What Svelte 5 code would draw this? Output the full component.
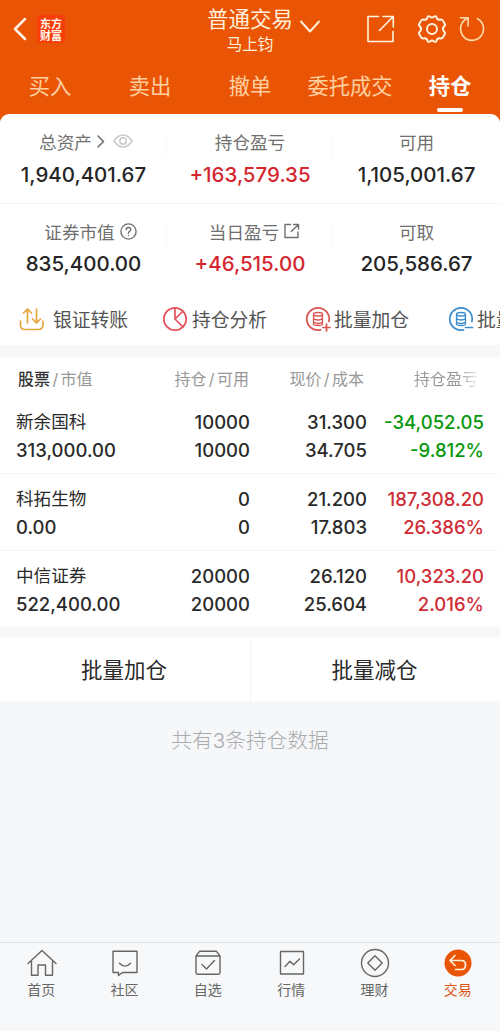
<script>
  const tabs = ['买入', '卖出', '撤单', '委托成交', '持仓'];
  const summary = [
    [
      { label: '总资产', value: '1,940,401.67', icon: 'eye' },
      { label: '持仓盈亏', value: '+163,579.35', up: true },
      { label: '可用', value: '1,105,001.67' }
    ],
    [
      { label: '证券市值', value: '835,400.00', icon: 'help' },
      { label: '当日盈亏', value: '+46,515.00', up: true, icon: 'share' },
      { label: '可取', value: '205,586.67' }
    ]
  ];
  const holdings = [
    { name: '新余国科', value: '313,000.00', qty: '10000', avail: '10000', price: '31.300', cost: '34.705', profit: '-34,052.05', rate: '-9.812%', down: true },
    { name: '科拓生物', value: '0.00', qty: '0', avail: '0', price: '21.200', cost: '17.803', profit: '187,308.20', rate: '26.386%' },
    { name: '中信证券', value: '522,400.00', qty: '20000', avail: '20000', price: '26.120', cost: '25.604', profit: '10,323.20', rate: '2.016%' }
  ];
  const actions = [
    { id: 'transfer', label: '银证转账' },
    { id: 'pie', label: '持仓分析' },
    { id: 'plus', label: '批量加仓' },
    { id: 'minus', label: '批量减仓' }
  ];
  const nav = [
    { id: 'home', label: '首页' },
    { id: 'chat', label: '社区' },
    { id: 'pick', label: '自选' },
    { id: 'market', label: '行情' },
    { id: 'wealth', label: '理财' },
    { id: 'trade', label: '交易' }
  ];
</script>

<div class="screen">
  <header>
    <div class="topbar">
      <div class="left">
        <svg class="back" width="14" height="24" viewBox="0 0 14 24"><path d="M12 2 2 12l10 10" /></svg>
        <div class="logo">东方<br />财富</div>
      </div>
      <div class="account">
        <div class="names">
          <div class="title">普通交易</div>
          <div class="user">马上钧</div>
        </div>
        <svg class="chevron" width="20" height="14" viewBox="0 0 20 14"><path d="m1 1.5 9 10 9-10" /></svg>
      </div>
      <div class="tools">
        <svg width="28" height="28" viewBox="0 0 28 28"><path d="M11.5 1.5H1v25h25V16.500M16 1.500h10.300V12M26 1.800 12.500 15.500" /></svg>
        <svg class="gear" width="30" height="30" viewBox="0 0 30 30"><path d="M10.500 3.200Q11.300 1.500 13 2.600Q15 4.400 17 2.600Q18.700 1.500 19.500 3.200Q20.300 6.300 23.200 5.700Q25 5 26 6.800L27.700 9.700Q28.600 11.300 27 12.500Q24.700 15 27 17.500Q28.600 18.700 27.700 20.300L26 23.200Q25 25 23.200 24.300Q20.300 23.700 19.500 26.800Q18.700 28.500 17 27.400Q15 25.600 13 27.400Q11.300 28.500 10.500 26.800Q9.700 23.700 6.800 24.300Q5 25 4 23.200L2.300 20.300Q1.400 18.700 3 17.500Q5.300 15 3 12.500Q1.400 11.300 2.300 9.700L4 6.800Q5 5 6.800 5.700Q9.700 6.300 10.500 3.200Z" /><circle cx="15" cy="15" r="5" /></svg>
        <svg class="reload" width="26" height="26" viewBox="0 0 26 26"><path d="M18.500 2.700A11.500 11.500 0 1 1 8 2.500M1.500 1.700 9.200 1.900 9 10" /></svg>
      </div>
    </div>
    <nav class="tabs">
      {#each tabs as tab}
        <div class="tab" class:active={tab === '持仓'}>{tab}</div>
      {/each}
    </nav>
  </header>

  <section class="summary">
    {#each summary as row}
      <div class="sumrow">
        {#each row as cell}
          <div class="cell">
            <div class="label {cell.icon ?? ''}-label">
              <span>{cell.label}</span>
              {#if cell.icon === 'eye'}
                <svg class="arrow" width="8" height="13" viewBox="0 0 8 13"><path d="m1 1 5.500 5.500L1 12" /></svg>
                <svg class="eye" width="20" height="14" viewBox="0 0 20 14"><path d="M1 7Q5 1 10 1T19 7Q15 13 10 13T1 7Z" /><circle cx="10" cy="7" r="3.200" /></svg>
              {:else if cell.icon === 'help'}
                <svg class="help" width="17" height="17" viewBox="0 0 17 17"><circle cx="8.500" cy="8.500" r="7.600" /><path d="M6.200 6.800Q6.200 4.500 8.500 4.500T10.800 6.600Q10.800 7.700 9.500 8.400Q8.500 9 8.500 10.200M8.500 12.500V12.600" /></svg>
              {:else if cell.icon === 'share'}
                <svg class="share" width="16" height="16" viewBox="0 0 16 16"><path d="M6.500 1.500H1v13h13V9M9.500 1.500H14.500V6M14.300 1.700 7.200 8.500" /></svg>
              {/if}
            </div>
            <div class="amount" class:up={cell.up}>{cell.value}</div>
          </div>
        {/each}
      </div>
    {/each}
    <div class="actions">
      {#each actions as action}
        <div class="action {action.id}">
          <svg width="26" height="26" viewBox="0 0 26 26">
            {#if action.id === 'transfer'}
              <path d="M1.500 15v4Q1.500 23.500 6 23.500H19Q24 23.500 24 19V15M8.500 17V3M4.500 7l4-4 4 4M17.500 3v14M13.500 13l4 4 4-4" />
            {:else if action.id === 'pie'}
              <circle cx="13" cy="13" r="11.200" /><path d="M13 2V13L20.500 5.500M13 13l8 8" />
            {:else}
              <path d="M15.500 23.900A11.200 11.200 0 1 1 23.900 15.500" />
              <path d="M8.500 8Q8.500 6.500 13 6.500T17.500 8V18Q17.500 19.500 13 19.500T8.500 18ZM8.500 8Q8.500 10 13 10T17.500 8M8.500 12.500Q10 14 13 14T17.500 12.500M8.500 16Q10 17.500 13 17.500T17.500 16" stroke-width="1.300" />
              <path d={action.id === 'plus' ? 'M18 21.500h7M21.500 18v7' : 'M17.500 21.500h7'} />
            {/if}
          </svg>
          <span>{action.label}</span>
        </div>
      {/each}
    </div>
  </section>

  <section class="holdings">
    <div class="hrow thead">
      <div><b>股票</b><i>/</i>市值</div>
      <div>持仓<i>/</i>可用</div>
      <div>现价<i>/</i>成本</div>
      <div class="fade">持仓盈亏</div>
    </div>
    {#each holdings as item}
      <div class="hrow stock">
        <div><p class="stockname">{item.name}</p><p>{item.value}</p></div>
        <div><p>{item.qty}</p><p>{item.avail}</p></div>
        <div><p>{item.price}</p><p>{item.cost}</p></div>
        <div class="gain" class:down={item.down}><p>{item.profit}</p><p>{item.rate}</p></div>
      </div>
    {/each}
  </section>

  <div class="batch">
    <div>批量加仓</div>
    <div>批量减仓</div>
  </div>
  <p class="count">共有3条持仓数据</p>

  <footer>
    {#each nav as item}
      <div class="navitem" class:current={item.id === 'trade'}>
        <svg width="30" height="30" viewBox="0 0 30 30">
          {#if item.id === 'home'}
            <path d="M1 15.500 15 2.500 29 15.500M4.500 13V27.200H11V17H18.500V27.200H25.500V13" />
          {:else if item.id === 'chat'}
            <path d="M3 3.300H27V24.500H12.500L8.500 27.500V24.500H3ZM9.500 15.200Q15 21 20.500 15.200" />
          {:else if item.id === 'pick'}
            <path d="M3 8 6.500 3.300H23.500L27 8V24.500Q27 26.200 25.300 26.200H4.700Q3 26.200 3 24.500ZM3 8H27M9 16.500l4.500 4.500L21.500 12.500" />
          {:else if item.id === 'market'}
            <path d="M3.500 3.500H26.500V26H3.500ZM8 18.500l5-5.200 3.500 3.400L22.500 11" />
          {:else if item.id === 'wealth'}
            <circle cx="15" cy="15" r="13.500" /><path d="m15 7.800 7.200 7.200L15 22.200 7.800 15Z" />
          {:else}
            <circle class="disc" cx="15" cy="15" r="13.500" /><path class="turn" d="M12 7.500 7 12.500l5 5M7 12.500H18.500Q22.500 12.500 22.500 17T18.500 21.500H12.500" />
          {/if}
        </svg>
        <span>{item.label}</span>
      </div>
    {/each}
  </footer>
</div>

<style>
  :global(body) { margin: 0; background: #f6f7f9; }
  p { margin: 0; }
  svg { display: block; flex: none; fill: none; stroke: currentColor; stroke-width: 1.6; stroke-linecap: round; stroke-linejoin: round; }
  .screen { width: 500px; height: 1031px; display: flex; flex-direction: column; overflow: hidden; background: #f6f7f9; color: #2a2a2a; font-family: Inter, "Noto Sans CJK SC", sans-serif; white-space: nowrap; }
  header { height: 122px; flex: none; background: #e95504; color: #fff0dc; }
  .topbar { height: 58px; display: grid; grid-template-columns: 190px 1fr 136px; }
  .left { display: flex; align-items: center; gap: 10px; padding-left: 13px; }
  .back { stroke-width: 2.5; color: #fff5e8; }
  .logo { width: 28px; height: 28px; box-sizing: border-box; padding-top: 2px; background: #fa3e0a; border-radius: 4px; text-align: center; font: 700 11px/12px "Noto Sans CJK SC", sans-serif; color: #fff7ee; }
  .account { display: flex; gap: 7px; padding-left: 17px; }
  .names { display: flex; flex-direction: column; align-items: center; }
  .title { font-size: 21.5px; line-height: 26px; margin-top: 6px; }
  .user { font-size: 15.5px; line-height: 22px; margin-top: 2px; }
  .chevron { margin-top: 20px; stroke-width: 1.9; }
  .tools { display: flex; align-items: center; padding-left: 3px; color: #fff5e0; }
  .gear { margin-left: 22px; stroke-width: 1.9; }
  .reload { margin-left: 12px; color: #ffdcae; }
  .tabs { display: grid; grid-template-columns: repeat(5, 100px); }
  .tab { height: 54px; line-height: 57px; text-align: center; font-size: 21.3px; color: #ffcfa0; }
  .tab.active { color: #fff; font-weight: 700; display: flex; flex-direction: column; align-items: center; }
  .tab.active::after { content: ""; flex: none; width: 26px; height: 4px; border-radius: 2px; background: #fff; margin-top: -7px; }
  .summary { margin-top: -8px; height: 231px; flex: none; background: #fff; border-radius: 9px 9px 0 0; overflow: hidden; }
  .sumrow { height: 89px; display: grid; grid-template-columns: 167px 166px 167px; border-bottom: 1px solid #f5f5f5; }
  .sumrow:nth-child(2) { border: 0; }
  .cell { text-align: center; background: linear-gradient(#f7f7f7, #f7f7f7) right 22px / 1px 20px no-repeat; }
  .cell:last-child { background: none; }
  .label { display: flex; justify-content: center; align-items: center; height: 26px; margin-top: 14px; font-size: 17.6px; color: #707070; }
  .eye-label { padding-left: 5px; }
  .help-label { padding-left: 14px; }
  .share-label { padding-left: 9px; }
  .arrow { margin-left: 5px; stroke-width: 1.6; }
  .eye { margin-left: 8px; color: #c9c9c9; }
  .help, .share { margin-left: 5px; stroke-width: 1.4; }
  .amount { font-size: 20.5px; line-height: 26px; margin-top: 8px; font-weight: 500; color: #252525; }
  .sumrow:nth-child(2) .amount { margin-top: 7px; }
  .amount.up { color: #d4262f; }
  .actions { display: flex; height: 52px; align-items: center; padding-left: 19px; color: #545454; font-size: 18.8px; }
  .action { display: flex; align-items: center; flex: none; }
  .action span { margin-top: -2px; }
  .action svg { stroke-width: 1.7; }
  .transfer { width: 143px; gap: 8px; }
  .transfer svg { color: #e5a63e; }
  .pie { width: 143px; gap: 4px; }
  .pie svg { color: #e4515b; }
  .plus { width: 143px; gap: 3px; }
  .plus svg { color: #dc514c; }
  .minus { gap: 3px; }
  .minus svg { color: #388bce; }
  .holdings { margin-top: 12px; height: 270px; flex: none; background: #fff; overflow: hidden; }
  .hrow { display: grid; grid-template-columns: 130px 104px 117px 117px; padding: 0 16px; text-align: right; }
  .hrow > :first-child { text-align: left; }
  .thead { height: 40px; line-height: 44px; font-size: 16px; color: #989898; padding: 0 22px 0 18px; grid-template-columns: 130px 101px 115px 114px; }
  .thead b { font-weight: 500; color: #333; }
  .thead i { font-style: normal; margin: 0 2.4px; }
  .fade { background: linear-gradient(90deg, #989898 84%, #eee 99%); -webkit-background-clip: text; background-clip: text; color: transparent; }
  .stock { height: 77px; font-size: 18.5px; font-weight: 500; line-height: 28.300px; padding-top: 11px; box-sizing: border-box; border-bottom: 1px solid #f6f6f6; }
  .stock:last-child { border: 0; }
  .stockname { font-weight: 400; font-size: 17.6px; }
  .gain { color: #cf2c36; }
  .down { color: #09980d; }
  .batch { margin-top: 10px; height: 64px; flex: none; display: grid; grid-template-columns: 1fr 1fr; background: #fff; text-align: center; font-size: 21.5px; line-height: 67px; }
  .batch div { padding-right: 2px; }
  .batch div + div { border-left: 1px solid #f3f4f7; }
  .count { text-align: center; margin-top: 25px; font-size: 20.7px; line-height: 30px; color: #a8aaac; font-weight: 300; }
  footer { margin-top: auto; height: 89px; flex: none; box-sizing: border-box; border-top: 1px solid #e0e2e5; display: grid; grid-template-columns: repeat(6, 1fr); background: #f7f8fa; color: #666; }
  .navitem { display: flex; flex-direction: column; align-items: center; padding-top: 5px; font-size: 14px; line-height: 20px; }
  .navitem svg { stroke-width: 1.4; }
  .navitem span { margin-top: 2px; margin-right: 1px; }
  .current { color: #dd5615; }
  .disc { fill: #e95504; stroke: none; }
  .turn { stroke: #fff2dd; stroke-width: 1.7; }
</style>
